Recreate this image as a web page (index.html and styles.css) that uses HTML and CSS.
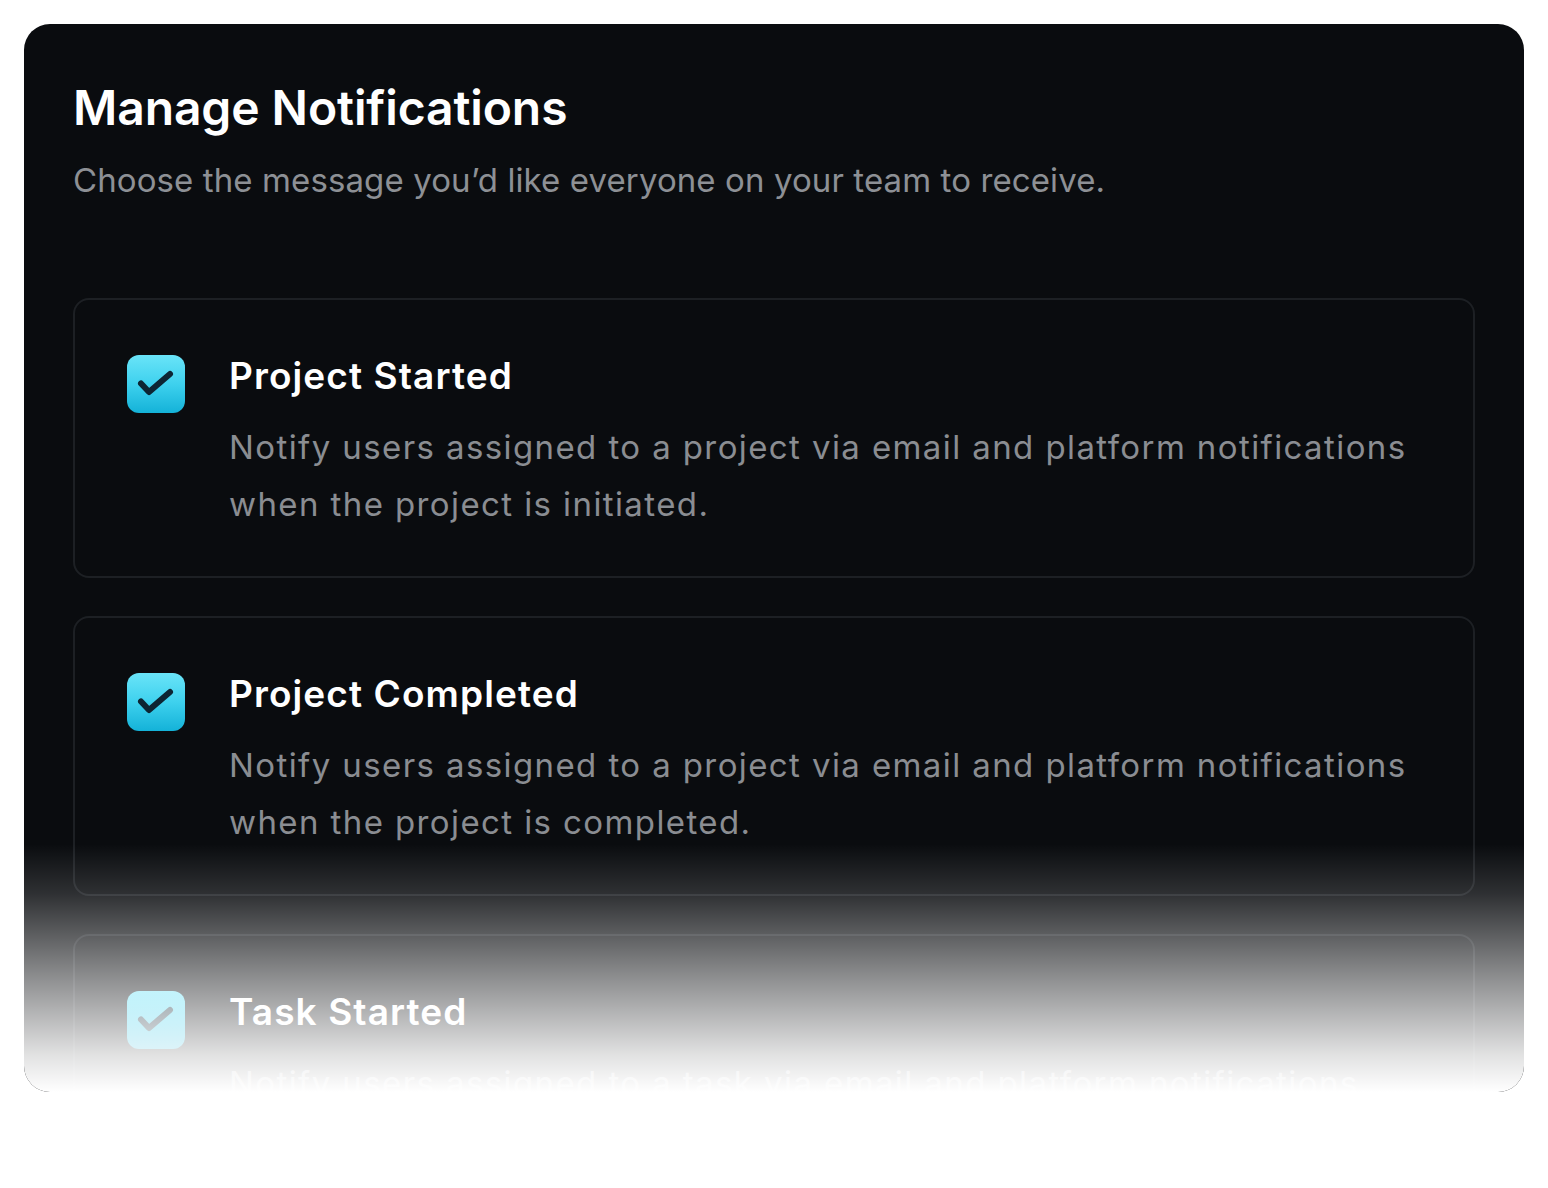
FILE: index.html
```html
<!DOCTYPE html>
<html lang="en">
<head>
<meta charset="utf-8">
<title>Manage Notifications</title>
<link rel="stylesheet" href="styles.css">
</head>
<body>
<main class="page">
  <section class="card">
    <header class="card-head">
      <h1 class="card-title">Manage Notifications</h1>
      <p class="card-sub">Choose the message you’d like everyone on your team to receive.</p>
    </header>
    <ul class="options">
      <li class="option">
        <span class="checkbox" aria-hidden="true">
          <svg viewBox="0 0 58 58" width="58" height="58"><path d="M14 28.5 L22 37 L43 19" fill="none" stroke="#0d2533" stroke-width="6" stroke-linecap="round" stroke-linejoin="round"/></svg>
        </span>
        <div class="option-body">
          <h2 class="option-title">Project Started</h2>
          <p class="option-desc">Notify users assigned to a project via email and platform notifications when the project is initiated.</p>
        </div>
      </li>
      <li class="option">
        <span class="checkbox" aria-hidden="true">
          <svg viewBox="0 0 58 58" width="58" height="58"><path d="M14 28.5 L22 37 L43 19" fill="none" stroke="#0d2533" stroke-width="6" stroke-linecap="round" stroke-linejoin="round"/></svg>
        </span>
        <div class="option-body">
          <h2 class="option-title">Project Completed</h2>
          <p class="option-desc">Notify users assigned to a project via email and platform notifications when the project is completed.</p>
        </div>
      </li>
      <li class="option">
        <span class="checkbox" aria-hidden="true">
          <svg viewBox="0 0 58 58" width="58" height="58"><path d="M14 28.5 L22 37 L43 19" fill="none" stroke="#0d2533" stroke-width="6" stroke-linecap="round" stroke-linejoin="round"/></svg>
        </span>
        <div class="option-body">
          <h2 class="option-title">Task Started</h2>
          <p class="option-desc">Notify users assigned to a task via email and platform notifications when the task is started.</p>
        </div>
      </li>
    </ul>
    <div class="fade" aria-hidden="true"></div>
  </section>
</main>
</body>
</html>
```

FILE: styles.css
```css
* { box-sizing: border-box; }

html, body {
  margin: 0;
  padding: 0;
  background: #ffffff;
}

body {
  font-family: Inter, "Noto Sans", "Liberation Sans", sans-serif;
  -webkit-font-smoothing: antialiased;
}

.page {
  padding: 24px;
}

.card {
  position: relative;
  width: 1500px;
  height: 1068px;
  overflow: hidden;
  background: #0a0c0f;
  border-radius: 26px;
  padding: 56px 49px 0;
}

.card-head {
  margin: 0;
}

.card-title {
  margin: 0;
  font-size: 48px;
  line-height: 56px;
  font-weight: 600;
  color: #ffffff;
  letter-spacing: -0.1px;
}

.card-sub {
  margin: 22px 0 0;
  font-size: 33px;
  line-height: 44px;
  font-weight: 400;
  color: #8d9095;
  letter-spacing: 0.1px;
}

.options {
  list-style: none;
  margin: 96px 0 0;
  padding: 0;
  display: flex;
  flex-direction: column;
  gap: 38px;
}

.option {
  display: flex;
  align-items: flex-start;
  gap: 44px;
  height: 280px;
  border: 2px solid #1d2024;
  border-radius: 16px;
  padding: 55px 52px 0;
}

.checkbox {
  flex: none;
  width: 58px;
  height: 58px;
  border-radius: 12px;
  background: linear-gradient(180deg, #6ae4f8 0%, #3ed1ee 50%, #14b2d8 100%);
  display: block;
}

.checkbox svg {
  display: block;
}

.option-body {
  flex: 1;
  min-width: 0;
  padding-top: 2px;
}

.option-title {
  margin: 0;
  font-size: 37px;
  line-height: 38px;
  font-weight: 600;
  color: #ffffff;
  letter-spacing: 1.1px;
}

.option-desc {
  margin: 24px 0 0;
  font-size: 33px;
  line-height: 57px;
  font-weight: 400;
  color: #8a8d92;
  letter-spacing: 1.4px;
}

.fade {
  position: absolute;
  left: 0;
  right: 0;
  bottom: 0;
  height: 248px;
  background: linear-gradient(180deg, rgba(255,255,255,0) 0%, rgba(255,255,255,0.15) 20%, rgba(255,255,255,0.55) 55%, rgba(255,255,255,0.88) 85%, #ffffff 100%);
  pointer-events: none;
}
```
